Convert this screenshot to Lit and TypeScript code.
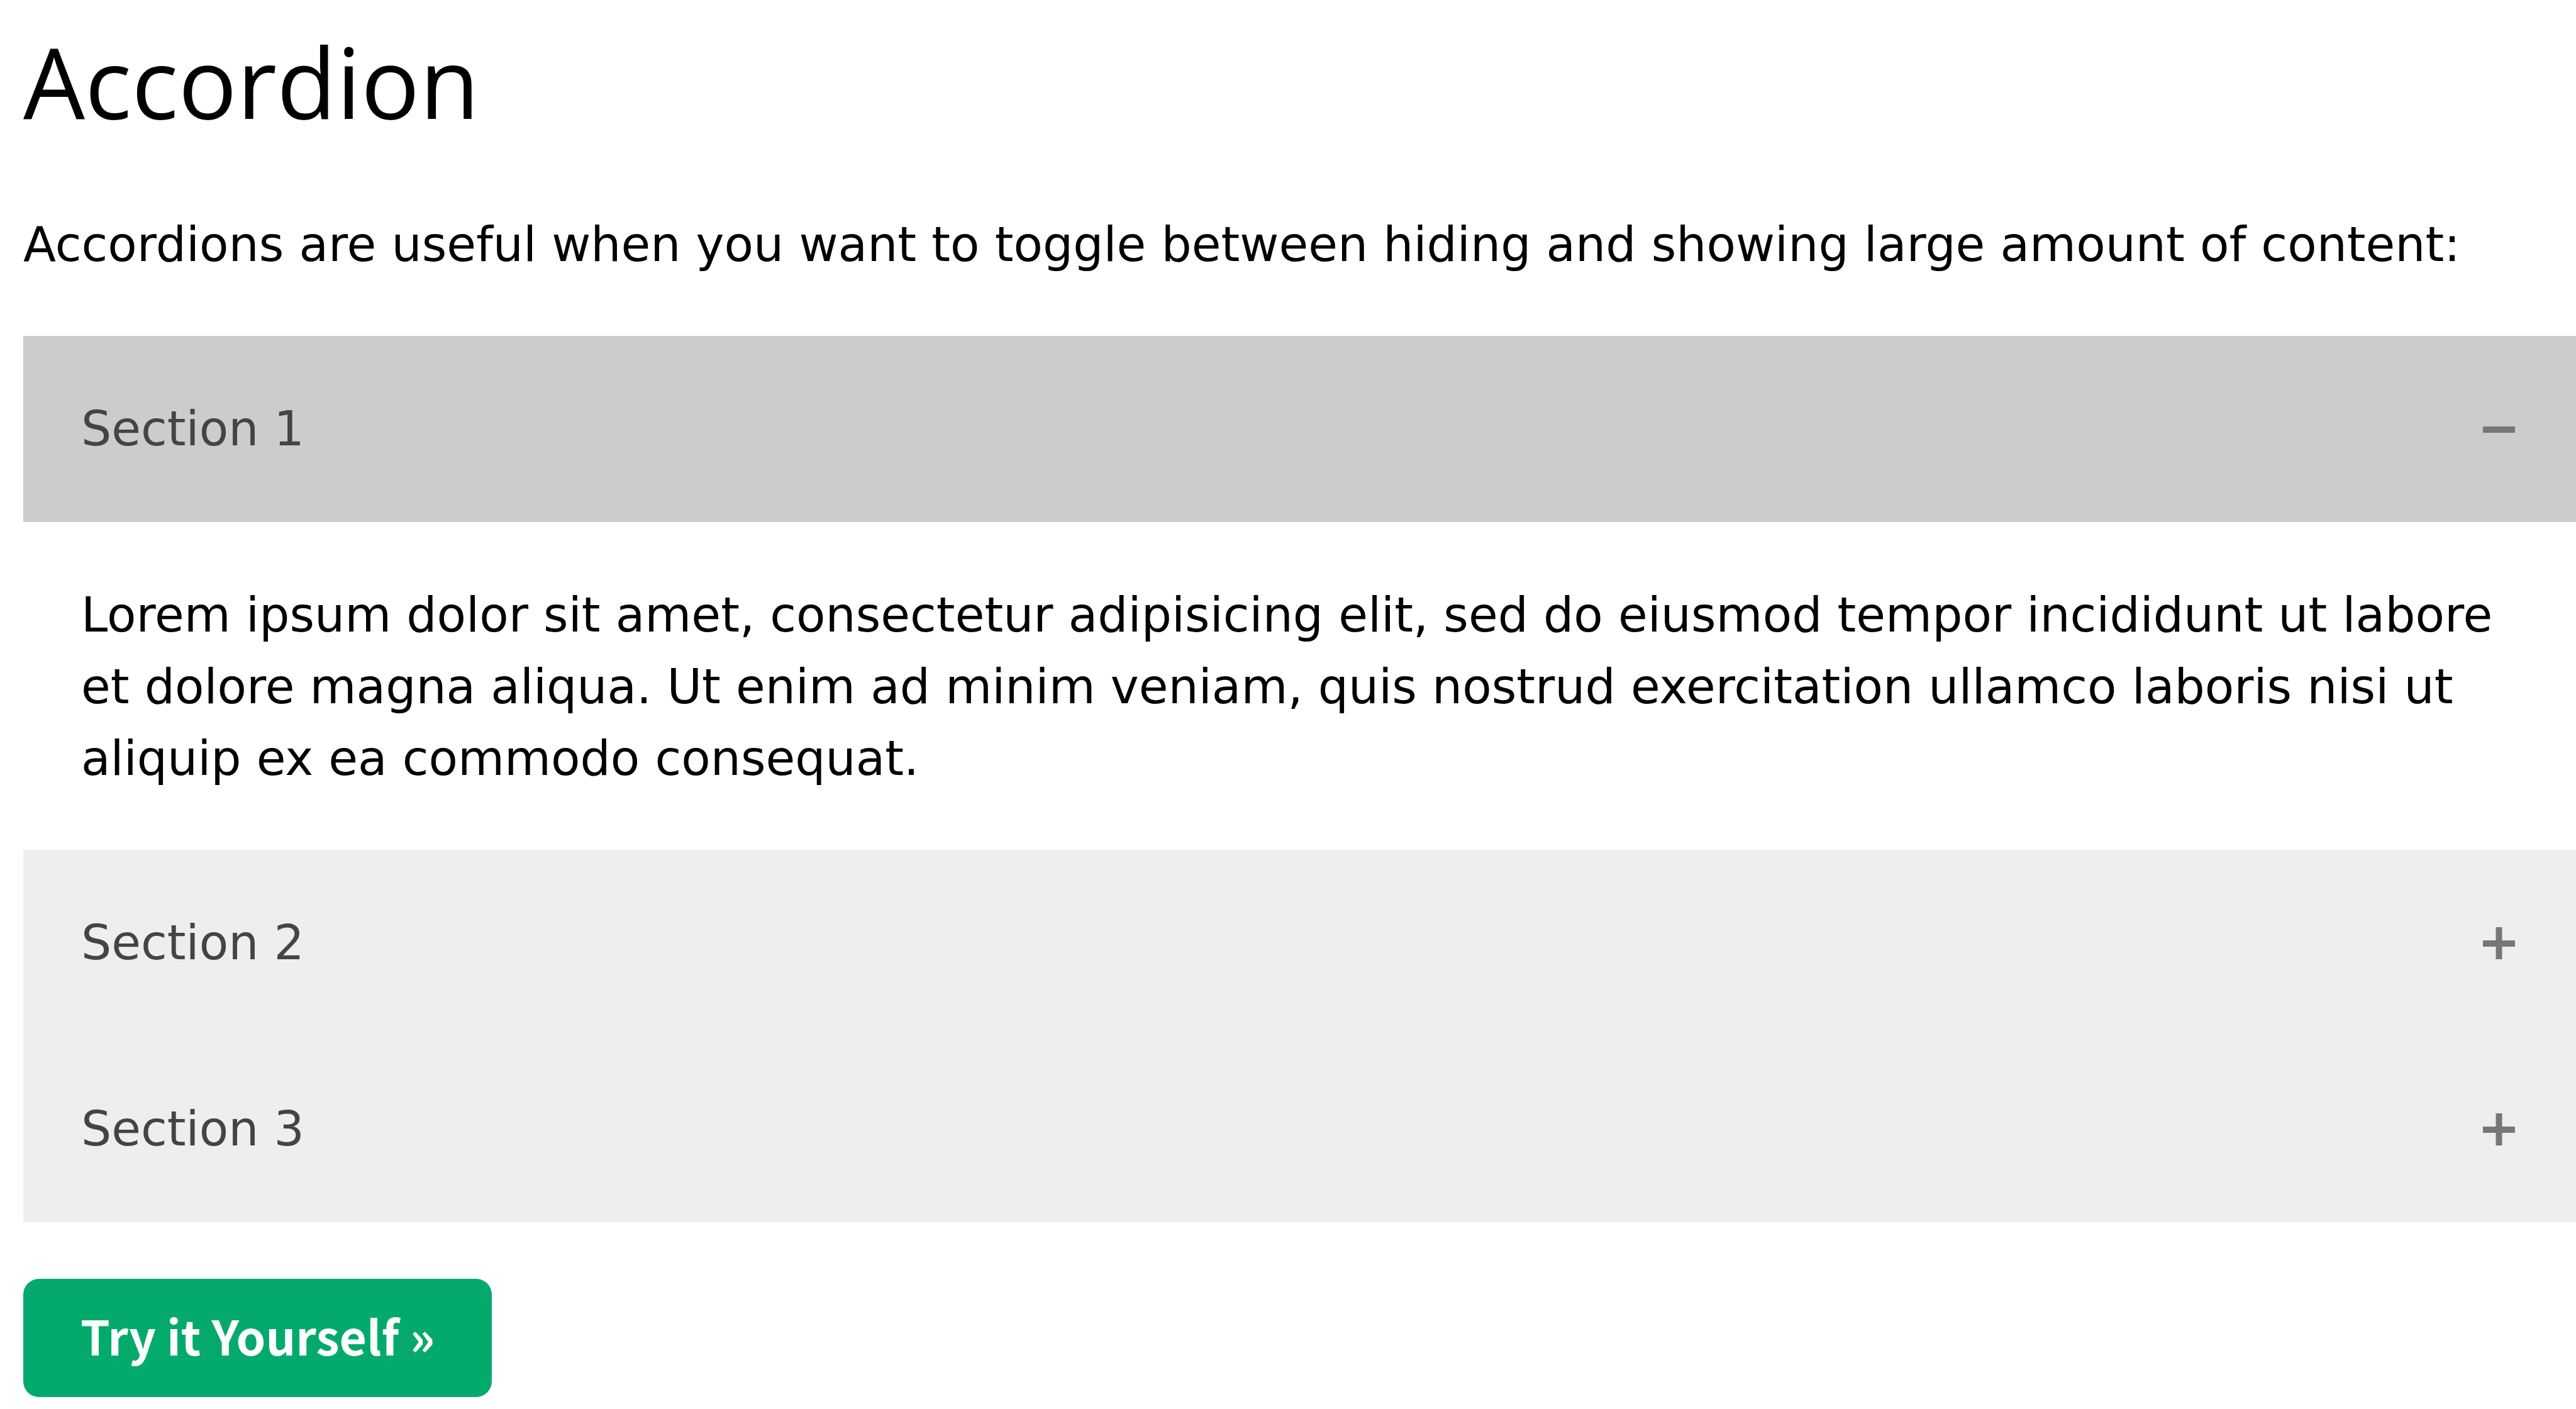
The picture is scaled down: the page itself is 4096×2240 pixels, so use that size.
import { LitElement, html, css, svg, nothing } from "lit";
import { customElement, property, state } from "lit/decorators.js";

interface Section {
  title: string;
  text: string;
}

const LOREM =
  "Lorem ipsum dolor sit amet, consectetur adipisicing elit, sed do eiusmod tempor incididunt ut labore et dolore magna aliqua. Ut enim ad minim veniam, quis nostrud exercitation ullamco laboris nisi ut aliquip ex ea commodo consequat.";

const SECTIONS: Section[] = [
  { title: "Section 1", text: LOREM },
  { title: "Section 2", text: LOREM },
  { title: "Section 3", text: LOREM },
];

@customElement("accordion-section")
class AccordionSection extends LitElement {
  @property() heading = "";
  @property() text = "";
  @property({ type: Boolean }) open = false;

  static styles = css`
    :host {
      display: block;
    }
    .title {
      margin: 0;
      font: inherit;
    }
    .header {
      display: flex;
      align-items: center;
      justify-content: space-between;
      width: 100%;
      box-sizing: border-box;
      padding: 91px 97px 91px 92px;
      border: 0;
      background: #eeeeee;
      color: #444444;
      font: inherit;
      text-align: left;
      cursor: pointer;
    }
    .header[aria-expanded="true"] {
      background: #cccccc;
    }
    .mark {
      width: 51px;
      height: 51px;
      flex: none;
      stroke: #777777;
      stroke-width: 10;
    }
    .panel {
      padding: 91px 92px 88px;
    }
    .text {
      margin: 0;
    }
  `;

  private toggle() {
    this.dispatchEvent(new CustomEvent("toggle-section"));
  }

  render() {
    return html`
      <h2 class="title">
        <button class="header" id="header" aria-expanded=${this.open} aria-controls="panel" @click=${this.toggle}>
          <span>${this.heading}</span>
          <svg class="mark" viewBox="0 0 51 51" aria-hidden="true">
            <path d="M0 26H51" />
            ${this.open ? nothing : svg`<path d="M25.5 0V51" />`}
          </svg>
        </button>
      </h2>
      <div class="panel" id="panel" role="region" aria-labelledby="header" ?hidden=${!this.open}>
        <p class="text">${this.text}</p>
      </div>
    `;
  }
}

@customElement("app-root")
class AppRoot extends LitElement {
  @state() private openIndex = 0;

  static styles = css`
    :host {
      display: block;
      background: #ffffff;
      color: #000000;
      font-family: Verdana, "DejaVu Sans", sans-serif;
      font-size: 76px;
      line-height: 114px;
    }
    .page {
      padding: 9px 0 19px 37px;
    }
    .heading {
      margin: 0;
      font-family: "Segoe UI", "Open Sans", sans-serif;
      font-size: 155px;
      font-weight: 400;
      line-height: 240px;
    }
    .intro {
      margin: 83px 0 88px;
    }
    .try {
      display: inline-block;
      margin-top: 90px;
      padding: 33px 91px 41px;
      border-radius: 25px;
      background: #04aa6d;
      color: #ffffff;
      font-family: "Source Sans Pro", "Noto Sans CJK SC", sans-serif;
      font-size: 75px;
      font-weight: 600;
      text-decoration: none;
      vertical-align: top;
    }
  `;

  render() {
    return html`
      <main class="page">
        <h1 class="heading">Accordion</h1>
        <p class="intro">
          Accordions are useful when you want to toggle between hiding and showing large amount of content:
        </p>
        ${SECTIONS.map(
          (s, i) => html`<accordion-section
            .heading=${s.title}
            .text=${s.text}
            .open=${this.openIndex === i}
            @toggle-section=${() => (this.openIndex = this.openIndex === i ? -1 : i)}
          ></accordion-section>`
        )}
        <a class="try" href="#try">Try it Yourself »</a>
      </main>
    `;
  }
}
